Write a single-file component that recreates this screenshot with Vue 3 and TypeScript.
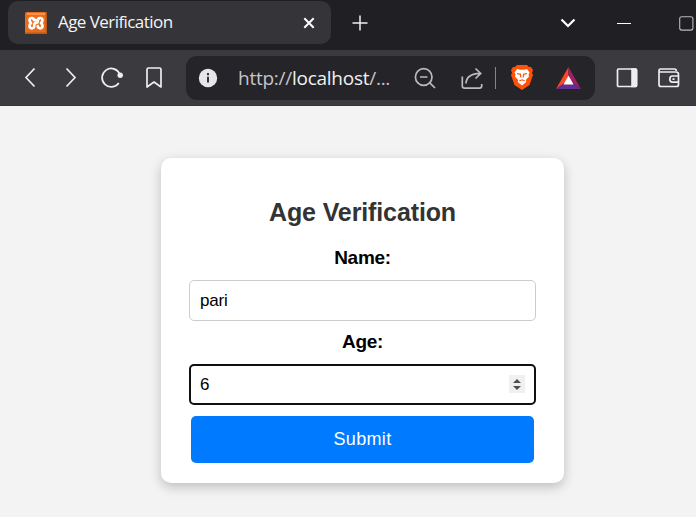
<script setup lang="ts">
import { ref } from 'vue'

const name = ref<string>('pari')
const age = ref<string>('6')
</script>

<template>
  <div class="window">
    <header class="tabs">
      <div class="tab">
        <svg class="favicon" width="22" height="22" viewBox="0 0 22 22">
          <rect width="22" height="22" rx="1.5" fill="#ea6c1d" />
          <path d="M0 21.3H22M21.3 1V21" stroke="#b95818" stroke-width="1.4" />
          <path d="M2 2H20" stroke="#ff9e58" stroke-width="1.5" />
          <path d="M9 8.2C9 5.5 4.5 5.2 4.5 8.2C4.5 9.4 5.2 10.2 6 11C5.2 11.8 4.5 12.6 4.5 13.8C4.5 17.2 9.2 17 9.2 14.2V13.2Q9.2 11 11 11Q12.8 11 12.8 8.8V8.2C12.8 5.5 17.5 5.2 17.5 8.2C17.5 9.4 16.8 10.2 16 11C16.8 11.8 17.5 12.6 17.5 13.8C17.5 17.2 12.8 17 12.8 14.2M9 8.2H11" fill="none" stroke="#fff" stroke-width="2.7" stroke-linejoin="round" stroke-linecap="round" />
        </svg>
        <span class="tab-title">Age Verification</span>
        <svg class="close" width="12" height="12" viewBox="0 0 12 12"><path d="M1.3 1.3L10.7 10.7M10.7 1.3L1.3 10.7" stroke="#fff" stroke-width="2" /></svg>
      </div>
      <svg class="plus" width="16" height="16" viewBox="0 0 16 16"><path d="M.5 8H15.5M8 .5V15.5" stroke="#eee" stroke-width="1.5" /></svg>
      <svg class="chevron" width="16" height="10" viewBox="0 0 16 10"><path d="M1.5 1.5L8 8L14.5 1.5" fill="none" stroke="#fff" stroke-width="2.2" /></svg>
      <svg class="minimize" width="14" height="2" viewBox="0 0 14 2"><path d="M0 1.5H14" stroke="#fff" /></svg>
      <svg class="maximize" width="15" height="15" viewBox="0 0 15 15"><rect x=".7" y=".7" width="13.2" height="13.4" rx="2" fill="none" stroke="#bbb" stroke-width="1.1" /></svg>
    </header>

    <nav class="toolbar">
      <svg class="icon back" viewBox="0 0 24 24"><path d="M16.5 2.5L8 11.5L16.5 20.5" /></svg>
      <svg class="icon forward" viewBox="0 0 24 24"><path d="M7.5 2.5L16 11.5L7.5 20.5" /></svg>
      <svg class="icon reload" viewBox="0 0 24 24">
        <path d="M19.7 8A9.2 9.2 0 1 0 18.8 17" /><circle cx="20.2" cy="9.2" r="2.7" fill="#eee" stroke="none" />
      </svg>
      <svg class="icon bookmark" viewBox="0 0 24 24"><path d="M5 21V3.5Q5 2 6.5 2H17.5Q19 2 19 3.5V21L12 16Z" stroke-linejoin="round" /></svg>
      <div class="address">
        <svg class="info" width="20" height="20" viewBox="0 0 20 20"><circle cx="10" cy="10" r="9.2" fill="#e6e6ea" /><path d="M10 5V7.2M10 8.7V14.5" stroke="#333239" stroke-width="2" /></svg>
        <span class="url">http://<b>localhost</b>/...</span>
        <svg class="icon muted zoom" viewBox="0 0 24 24"><circle cx="10.7" cy="11" r="8.3" /><path d="M7 11H14.5M16.8 16.8L22 22" /></svg>
        <svg class="icon muted share" viewBox="0 0 24 24"><path d="M2.3 10.5V20Q2.3 22.2 4.5 22.2H19.5Q21.7 22.2 21.7 20V18M6 17.5C6 11.5 11 7.4 20 7.4M15.5 2.5L20.7 7.4L15.5 12.5" /></svg>
        <i class="divider"></i>
        <svg class="brave" width="22" height="25" viewBox="0 0 22 25">
          <path d="M6 0H16L18 2L20 2L22 5L21 8L22 10L18.5 20L11 25L3.5 20L0 10L1 8L0 5L2 2H4Z" fill="#ff5208" />
          <path d="M6 4L9 4.7H13L16 4L18.5 7.5L17.5 9.5L18 11.5L14.8 15L15.2 17L11 20.5L6.8 17L7.2 15L4 11.5L4.5 9.5L3.5 7.5Z" fill="#fff" />
          <path d="M6 8.5L9.4 9.3L9.8 12.5M16 8.5L12.6 9.3L12.2 12.5M8.3 16L11 14.8L13.7 16" fill="none" stroke="#ff5208" stroke-width="1.2" />
        </svg>
        <svg class="rewards" width="25" height="22" viewBox="0 0 25 22">
          <path d="M12.5 0L0 22L12.5 13Z" fill="#ff4724" /><path d="M12.5 0L25 22L12.5 13Z" fill="#9e1f63" /><path d="M0 22H25L12.5 13Z" fill="#662d91" /><path d="M12.5 8.5L7.5 17.5H17.5Z" fill="#fff" />
        </svg>
      </div>
      <svg class="icon sidebar" viewBox="0 0 24 24"><rect x="2.5" y="3" width="19" height="17.5" rx="1" /><path d="M16.2 2.2H20.5Q22.3 2.2 22.3 4V19.5Q22.3 21.3 20.5 21.3H16.2Z" fill="#eee" stroke="none" /></svg>
      <svg class="icon wallet" viewBox="0 0 24 24"><path d="M2 5.5V18.5Q2 20.5 4 20.5H19.5Q21.5 20.5 21.5 18.5V8.5Q21.5 6 19 6H3.2Q2 6 2 4.5Q2 3 3.5 3H17.5Q19.3 3 19.3 5M21.5 10H15.5Q12.8 10 12.8 13Q12.8 16.2 15.5 16.2H21.5M15.5 13.2H17.5" /></svg>
    </nav>

    <main class="page">
      <form class="card" @submit.prevent>
        <h2>Age Verification</h2>
        <label for="name">Name:</label>
        <input id="name" v-model="name" class="field" type="text">
        <label class="age-label" for="age">Age:</label>
        <div class="field number">
          <input id="age" v-model="age" type="text" inputmode="numeric">
          <svg class="spinner" width="16" height="18" viewBox="0 0 16 18"><rect width="16" height="18" fill="#f0f0f0" /><path d="M4 8L8 4L12 8ZM4 11L8 15L12 11Z" fill="#505050" /></svg>
        </div>
        <button type="submit">Submit</button>
      </form>
    </main>
  </div>
</template>

<style>
body { margin: 0; overflow: hidden; }
</style>

<style scoped>
* { box-sizing: border-box; }
svg { display: block; flex: none; }
.window { width: 696px; height: 517px; overflow: hidden; display: flex; flex-direction: column; background: #f3f3f3; font-family: "Liberation Sans", Arial, sans-serif; }
.tabs { height: 50px; flex: none; display: flex; align-items: flex-start; padding: 1px 0 0 8px; background: #201f24; }
.tab { display: flex; align-items: center; width: 323px; height: 43px; padding: 0 16px 0 17px; border-radius: 10px; background: #353439; flex: none; }
.tab-title { margin: 0 0 2px 11px; color: #f4f4f5; font: 17px/24px "Open Sans", sans-serif; letter-spacing: -0.56px; white-space: nowrap; }
.close { margin-left: auto; }
.plus { margin: 14px 0 0 21px; }
.chevron { margin: 17px 0 0 192px; }
.minimize { margin: 21px 0 0 41px; }
.maximize { margin: 15px 0 0 48px; }
.toolbar { height: 56px; flex: none; display: flex; align-items: center; background: #3b3a3f; border-bottom: 1px solid #333237; padding-left: 18px; }
.icon { width: 24px; height: 24px; fill: none; stroke: #eee; stroke-width: 1.7; }
.muted { stroke: #bbbabf; }
.forward { margin-left: 17px; }
.reload { margin-left: 17px; }
.bookmark { margin-left: 18px; }
.address { display: flex; align-items: center; width: 409px; height: 44px; margin: 0 0 0 20px; padding-left: 12px; border-radius: 11px; background: #252429; flex: none; }
.url { width: 156px; margin-left: 20px; color: #c5c5c9; font: 19px/26px "Open Sans", sans-serif; letter-spacing: -0.26px; white-space: nowrap; }
.url b { color: #f0f0f2; font-weight: 400; }
.zoom { margin-left: 19px; }
.share { margin-left: 23px; }
.divider { width: 1px; height: 22px; margin-left: 11px; background: #85848a; }
.brave { margin-left: 15px; }
.rewards { margin-left: 23px; }
.sidebar { margin-left: 20px; }
.wallet { margin-left: 18px; }
.page { flex: 1; padding: 52px 0 0 161px; background: #f3f3f3; }
.card { display: flex; flex-direction: column; align-items: center; width: 403px; height: 325px; padding: 39px 28px 20px; border-radius: 10px; background: #fff; box-shadow: 0 4px 12px rgba(0, 0, 0, .22); }
h2 { margin: 0 0 20px; color: #333; font-size: 25px; line-height: 30px; letter-spacing: -0.12px; }
label { font-size: 19px; font-weight: 700; line-height: 22px; letter-spacing: -0.3px; }
.age-label { margin-top: 10px; }
.field { width: 347px; height: 41px; border: 1px solid #ccc; border-radius: 5px; padding: 0 10px; background: #fff; font: 17px "Liberation Sans", Arial, sans-serif; letter-spacing: -0.2px; color: #000; outline: 0; flex: none; }
#name { margin-top: 11px; }
.number { display: flex; align-items: center; margin-top: 11px; border: 2px solid #101010; padding: 0 9px; }
.number input { flex: 1; min-width: 0; border: 0; padding: 0; outline: 0; background: none; color: #000; font: inherit; }
.spinner { margin-bottom: 1px; }
button { width: 343px; height: 47px; margin-top: 11px; border: 0; border-radius: 5px; background: #007bff; color: #fff; font: 18px "Liberation Sans", Arial, sans-serif; letter-spacing: 0.35px; flex: none; }
</style>
